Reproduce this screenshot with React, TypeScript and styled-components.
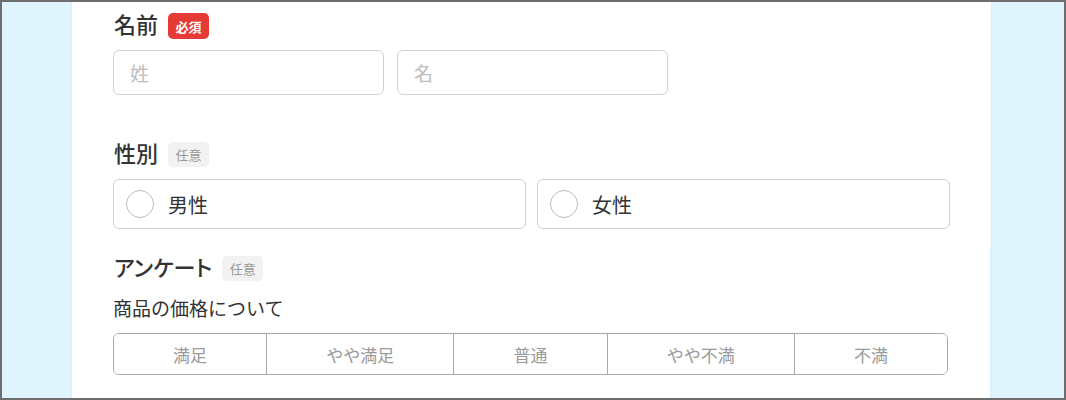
import styled, { createGlobalStyle } from 'styled-components';

const GlobalStyle = createGlobalStyle`
  html, body {
    margin: 0;
    padding: 0;
  }
  body {
    font-family: "Noto Sans CJK JP", "Noto Sans", sans-serif;
    color: #333;
  }
  * {
    box-sizing: border-box;
  }
`;

const Frame = styled.div`
  width: 1066px;
  height: 400px;
  border: 2px solid #6e6e6e;
  background: #e0f4fd;
  overflow: hidden;
  padding-left: 70px;
`;

const Card = styled.section<{ $width: number; $padTop: number; $padBottom: number }>`
  width: ${(p) => p.$width}px;
  background: #fff;
  padding: ${(p) => p.$padTop}px 41px ${(p) => p.$padBottom}px 41px;
  box-shadow: -1px 0 0 #d9eef8, 1px 0 0 #d9eef8;
`;

const LabelRow = styled.div<{ $gapTop?: number }>`
  display: flex;
  align-items: flex-start;
  gap: 10px;
  margin-top: ${(p) => p.$gapTop ?? 0}px;
`;

const Label = styled.span`
  font-size: 22px;
  line-height: 20px;
  font-weight: 500;
  color: #333;
  font-feature-settings: "palt";
  padding-left: 1px;
`;

const Badge = styled.span<{ $required?: boolean }>`
  display: inline-flex;
  align-items: center;
  justify-content: center;
  height: ${(p) => (p.$required ? 26 : 25)}px;
  width: 41px;
  border-radius: 5px;
  font-size: 13px;
  font-weight: ${(p) => (p.$required ? 700 : 400)};
  background: ${(p) => (p.$required ? '#e53a35' : '#f2f2f2')};
  color: ${(p) => (p.$required ? '#fff' : '#999')};
`;

const InputRow = styled.div`
  display: flex;
  gap: 13px;
  margin-top: 11px;
`;

const TextInput = styled.input`
  width: 271px;
  height: 45px;
  border: 1px solid #d2d2d2;
  border-radius: 6px;
  padding: 0 16px;
  font-family: inherit;
  font-size: 19px;
  color: #333;
  outline: none;
  &::placeholder {
    color: #bdbdbd;
  }
`;

const RadioRow = styled.div`
  display: flex;
  gap: 11px;
  margin-top: 12px;
`;

const RadioOption = styled.label`
  flex: 1;
  height: 50px;
  display: flex;
  align-items: center;
  gap: 14px;
  padding-left: 12px;
  border: 1px solid #d2d2d2;
  border-radius: 6px;
  font-size: 20px;
  color: #333;
  cursor: pointer;
`;

const Circle = styled.span`
  width: 28px;
  height: 28px;
  border-radius: 50%;
  border: 1px solid #bdbdbd;
  background: #fff;
`;

const Question = styled.div`
  margin-top: 13px;
  font-size: 19px;
  line-height: 28px;
  color: #333;
`;

const Segmented = styled.div`
  display: flex;
  width: 835px;
  height: 42px;
  margin-top: 11px;
  border: 1px solid #a8a8a8;
  border-radius: 6px;
  overflow: hidden;
`;

const Segment = styled.button`
  flex: 1 1 auto;
  border: none;
  background: #fff;
  font-family: inherit;
  font-size: 17px;
  color: #9a9a9a;
  padding: 0;
  cursor: pointer;
  & + & {
    border-left: 1px solid #a8a8a8;
  }
`;

const choices = ['満足', 'やや満足', '普通', 'やや不満', '不満'];

export default function App() {
  return (
    <>
      <GlobalStyle />
      <Frame>
        <Card $width={919} $padTop={11} $padBottom={19}>
          <LabelRow>
            <Label>名前</Label>
            <Badge $required>必須</Badge>
          </LabelRow>
          <InputRow>
            <TextInput placeholder="姓" />
            <TextInput placeholder="名" />
          </InputRow>

          <LabelRow $gapTop={47}>
            <Label>性別</Label>
            <Badge>任意</Badge>
          </LabelRow>
          <RadioRow>
            <RadioOption>
              <Circle />
              男性
            </RadioOption>
            <RadioOption>
              <Circle />
              女性
            </RadioOption>
          </RadioRow>
        </Card>

        <Card $width={918} $padTop={8} $padBottom={30}>
          <LabelRow>
            <Label>アンケート</Label>
            <Badge>任意</Badge>
          </LabelRow>
          <Question>商品の価格について</Question>
          <Segmented>
            {choices.map((c) => (
              <Segment key={c}>{c}</Segment>
            ))}
          </Segmented>
        </Card>
      </Frame>
    </>
  );
}
